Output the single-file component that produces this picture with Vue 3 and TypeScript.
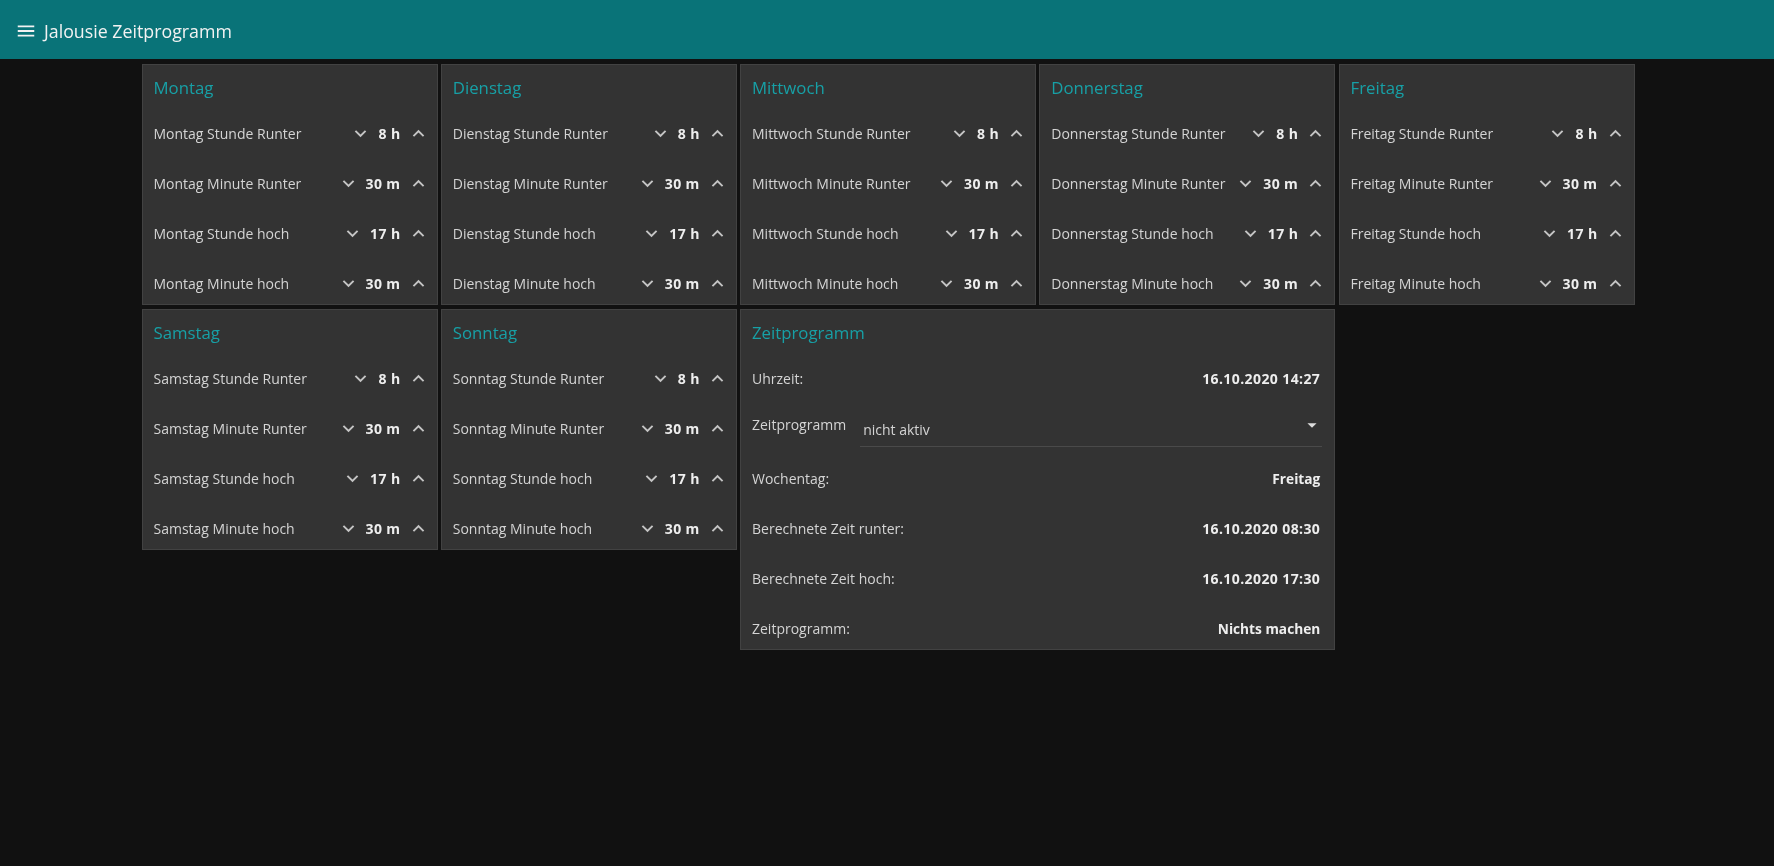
<script setup lang="ts">
interface TimeRow {
  label: string
  value: string
}

const days = ['Montag', 'Dienstag', 'Mittwoch', 'Donnerstag', 'Freitag', 'Samstag', 'Sonntag']

function dayRows(day: string): TimeRow[] {
  return [
    { label: `${day} Stunde Runter`, value: '8 h' },
    { label: `${day} Minute Runter`, value: '30 m' },
    { label: `${day} Stunde hoch`, value: '17 h' },
    { label: `${day} Minute hoch`, value: '30 m' }
  ]
}

const infoAfterSelect: TimeRow[] = [
  { label: 'Wochentag:', value: 'Freitag' },
  { label: 'Berechnete Zeit runter:', value: '16.10.2020 08:30' },
  { label: 'Berechnete Zeit hoch:', value: '16.10.2020 17:30' },
  { label: 'Zeitprogramm:', value: 'Nichts machen' }
]

const hasDigits = (text: string) => /\d/.test(text)
</script>

<template>
  <div class="page">
    <header class="toolbar">
      <svg class="menu-icon" viewBox="0 0 24 24"><path d="M3 18h18v-2H3v2zm0-5h18v-2H3v2zm0-7v2h18V6H3z" /></svg>
      <span class="toolbar-title">Jalousie Zeitprogramm</span>
    </header>

    <main class="grid">
      <section v-for="day in days" :key="day" class="card">
        <h2 class="card-title">{{ day }}</h2>
        <div v-for="row in dayRows(day)" :key="row.label" class="row">
          <span class="label">{{ row.label }}</span>
          <svg class="chevron" viewBox="0 0 24 24"><path d="M7.41 8.59 12 13.17l4.59-4.58L18 10l-6 6-6-6z" /></svg>
          <b class="value num">{{ row.value }}</b>
          <svg class="chevron" viewBox="0 0 24 24"><path d="M7.41 15.41 12 10.83l4.59 4.58L18 14l-6-6-6 6z" /></svg>
        </div>
      </section>

      <section class="card card-wide">
        <h2 class="card-title">Zeitprogramm</h2>
        <div class="row info">
          <span class="label">Uhrzeit:</span>
          <b class="value num">16.10.2020 14:27</b>
        </div>
        <div class="row select-row">
          <span class="label">Zeitprogramm</span>
          <div class="select">
            <span>nicht aktiv</span>
            <svg class="caret" viewBox="0 0 24 24"><path d="M7 10l5 5 5-5z" /></svg>
          </div>
        </div>
        <div v-for="row in infoAfterSelect" :key="row.label" class="row info">
          <span class="label">{{ row.label }}</span>
          <b class="value" :class="{ num: hasDigits(row.value) }">{{ row.value }}</b>
        </div>
      </section>
    </main>
  </div>
</template>

<style>
html,
body {
  background: #111111;
}
</style>

<style scoped>
.page {
  min-height: 100vh;
  background: #111111;
  color: #d4d4d4;
  font-family: 'Open Sans', 'Noto Sans', sans-serif;
  font-size: 14px;
  filter: blur(0.45px);
}

.toolbar {
  height: 59px;
  box-sizing: border-box;
  background: #097378;
  display: flex;
  align-items: center;
  padding: 2px 0 0 15px;
  color: #f2f2f2;
}

.menu-icon {
  width: 22px;
  height: 22px;
  fill: #f2f2f2;
}

.toolbar-title {
  margin-left: 7px;
  font-size: 17.8px;
}

.grid {
  display: grid;
  grid-template-columns: repeat(5, 296px);
  gap: 4px 3.25px;
  padding: 5px 0 0 141.5px;
  align-items: start;
}

.card {
  background: #333333;
  border: 1px solid #424242;
  box-sizing: border-box;
  padding: 0 7px 0 11px;
  display: flex;
  flex-direction: column;
  gap: 8px;
}

.card-wide {
  grid-column: span 2;
  padding-right: 14px;
}

.card-title {
  margin: 0;
  height: 39px;
  line-height: 46px;
  font-size: 16.8px;
  font-weight: 400;
  color: #17a0a6;
}

.row {
  height: 42px;
  display: flex;
  align-items: center;
}

.label {
  flex: 1;
  white-space: nowrap;
}

.value {
  margin: 0 6px;
  font-size: 13.7px;
  font-weight: 700;
  white-space: nowrap;
  color: #eeeeee;
}

.num {
  font-size: 14px;
  letter-spacing: 0.4px;
}

.info .value {
  margin: 0;
}

.chevron {
  width: 23px;
  height: 23px;
  fill: #c4c4c4;
  flex: none;
}

.select-row .label {
  flex: none;
  margin-top: -8px;
}

.select {
  flex: 1;
  align-self: flex-start;
  margin: 0 -2px 0 14px;
  height: 40px;
  box-sizing: border-box;
  padding: 5px 0 0 3px;
  border-bottom: 1px solid #4a4a4a;
  display: flex;
  align-items: center;
  justify-content: space-between;
}

.caret {
  width: 22px;
  height: 22px;
  fill: #dddddd;
  margin: -8px -1px 0 0;
}
</style>
